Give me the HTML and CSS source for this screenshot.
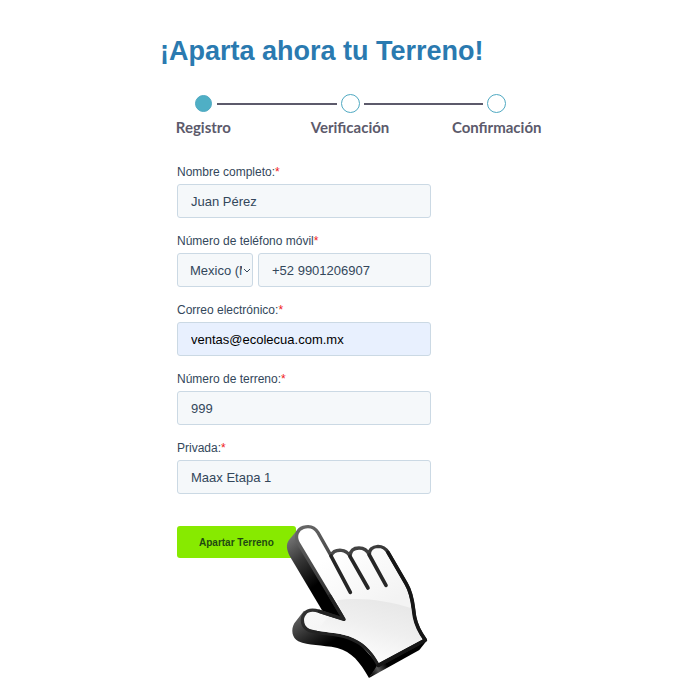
FILE: index.html
```html
<!DOCTYPE html>
<html lang="es">
<head>
    <meta charset="UTF-8">
    <meta name="viewport" content="width=device-width, initial-scale=1.0">
    <title>Aparta ahora tu Terreno</title>
    <link rel="stylesheet" href="styles.css">
</head>
<body>
    <main class="container">
        <h1>¡Aparta ahora tu Terreno!</h1>

        <ol class="steps">
            <li class="step active"><span class="track"><span class="dot"></span></span>Registro</li>
            <li class="step"><span class="track"><span class="dot"></span></span>Verificación</li>
            <li class="step"><span class="track"><span class="dot"></span></span>Confirmación</li>
        </ol>

        <form class="form">
            <div class="field">
                <label for="nombre">Nombre completo:<span class="required">*</span></label>
                <input type="text" id="nombre" value="Juan Pérez">
            </div>
            <div class="field">
                <label for="telefono">Número de teléfono móvil<span class="required">*</span></label>
                <div class="phone">
                    <div class="country">
                        <select id="pais" aria-label="País">
                            <option>Mexico (México)</option>
                        </select>
                        <svg class="chevron" viewBox="0 0 8 5" aria-hidden="true"><path d="M1 1l3 3 3-3"/></svg>
                    </div>
                    <input type="tel" id="telefono" value="+52 9901206907">
                </div>
            </div>
            <div class="field">
                <label for="correo">Correo electrónico:<span class="required">*</span></label>
                <input type="email" id="correo" class="autofilled" value="ventas@ecolecua.com.mx">
            </div>
            <div class="field">
                <label for="terreno">Número de terreno:<span class="required">*</span></label>
                <input type="text" id="terreno" value="999">
            </div>
            <div class="field">
                <label for="privada">Privada:<span class="required">*</span></label>
                <input type="text" id="privada" value="Maax Etapa 1">
            </div>

            <div class="actions">
                <button type="submit" class="submit-btn">Apartar Terreno</button>
                <svg class="hand" viewBox="0 0 480 510" aria-hidden="true">
                    <defs>
                        <linearGradient id="side" gradientUnits="userSpaceOnUse" x1="30" y1="60" x2="130" y2="190">
                            <stop offset="0" stop-color="#777"/>
                            <stop offset="0.45" stop-color="#383838"/>
                            <stop offset="1" stop-color="#000"/>
                        </linearGradient>
                        <linearGradient id="thumb" gradientUnits="userSpaceOnUse" x1="50" y1="290" x2="120" y2="400">
                            <stop offset="0" stop-color="#6a6a6a"/>
                            <stop offset="0.5" stop-color="#333"/>
                            <stop offset="1" stop-color="#000"/>
                        </linearGradient>
                        <linearGradient id="face" gradientUnits="userSpaceOnUse" x1="340" y1="240" x2="280" y2="440">
                            <stop offset="0" stop-color="#e6e6e6"/>
                            <stop offset="0.5" stop-color="#efefef"/>
                            <stop offset="1" stop-color="#fdfdfd"/>
                        </linearGradient>
                        <linearGradient id="fingers" gradientUnits="userSpaceOnUse" x1="180" y1="100" x2="300" y2="280">
                            <stop offset="0" stop-color="#fff"/>
                            <stop offset="1" stop-color="#f3f3f3"/>
                        </linearGradient>
                        <linearGradient id="edge" gradientUnits="userSpaceOnUse" x1="70" y1="30" x2="230" y2="260">
                            <stop offset="0" stop-color="#666"/>
                            <stop offset="1" stop-color="#222"/>
                        </linearGradient>
                        <linearGradient id="wrist" gradientUnits="userSpaceOnUse" x1="268" y1="475" x2="320" y2="445">
                            <stop offset="0" stop-color="#000"/>
                            <stop offset="0.5" stop-color="#555"/>
                            <stop offset="1" stop-color="#000"/>
                        </linearGradient>
                    </defs>
                    <!-- sides -->
                    <path fill="url(#side)" d="M50 44L27 72C17 86 20 102 29 120L127 284L192 312L190 260L70 60Z"/>
                    <path fill="url(#thumb)" d="M72 284L43 322C32 341 36 366 55 376C85 390 125 386 172 396C215 407 240 438 267 486L296 446L200 340Z"/>
                    <path fill="url(#wrist)" d="M267 486L294 444L436 366L440 374L418 402Z"/>
                    <!-- palm and fingers -->
                    <path fill="url(#fingers)" stroke="url(#edge)" stroke-width="10" stroke-linejoin="round" d="M192 310L54 80C44 60 52 40 70 34C90 28 105 35 114 50L153 119C158 107 170 102 184 103C198 104 205 112 210 120C211 104 221 96 237 96C253 96 263 105 268 117C267 101 277 92 294 91C308 91 317 97 324 109L379 204C400 240 398 272 404 304C409 330 421 351 436 372L295 448C272 405 248 381 204 365C162 351 122 355 86 343C67 334 61 309 74 293C84 280 99 280 118 286Z"/>
                    <path fill="url(#face)" d="M170 253C235 243 320 252 395 277C398 310 410 342 427 370L297 440C273 398 246 376 207 361C180 351 140 349 110 344L145 302L199 316Z"/>
                    <path fill="none" stroke="#222" stroke-width="10" stroke-linecap="round" stroke-linejoin="round" d="M150 240L192 310L118 286"/>
                    <path fill="none" stroke="#161616" stroke-width="11" stroke-linecap="round" stroke-linejoin="round" d="M324 109L379 204C400 240 398 272 404 304C409 330 421 351 436 372L295 448"/>
                    <path fill="none" stroke="#262626" stroke-width="11" stroke-linecap="round" d="M153 120L211 229M210 121L264 216M268 117L318 208"/>
                </svg>
            </div>
        </form>
    </main>
</body>
</html>
```
FILE: styles.css
```css
* {
    margin: 0;
    padding: 0;
    box-sizing: border-box;
}

body {
    min-height: 100vh;
    font-family: "Liberation Sans", Arial, sans-serif;
    background: #fff;
    color: #33475b;
}

.container {
    max-width: 440px;
    margin: 0 auto;
    padding: 35px 0 16px;
}

h1 {
    padding-left: 30px;
    font-size: 27px;
    line-height: 32px;
    color: #2a7ab0;
    white-space: nowrap;
}

.steps {
    display: flex;
    margin-top: 27px;
    list-style: none;
}

.step {
    flex: 1;
    font-family: Lato, sans-serif;
    font-size: 15px;
    font-weight: 700;
    line-height: 20px;
    text-align: center;
    color: #5c5a6b;
}

.track {
    display: flex;
    align-items: center;
    gap: 4px;
    margin-bottom: 4px;
}

.track::before,
.track::after {
    content: "";
    flex: 1;
    height: 2px;
    background: #5c5a6b;
}

.step:first-child .track::before,
.step:last-child .track::after {
    visibility: hidden;
}

.dot {
    width: 19px;
    height: 19px;
    border: 1px solid #4fa9c2;
    border-radius: 50%;
}

.active .dot {
    width: 17px;
    height: 17px;
    margin: 1px;
    background: #4fafc5;
}

.form {
    max-width: 301px;
    margin-top: 27px;
    padding-left: 47px;
}

.field {
    margin-bottom: 15px;
}

label {
    display: block;
    margin-bottom: 4px;
    font-size: 12px;
    line-height: 16px;
}

.required {
    color: #f02020;
}

input,
select {
    display: block;
    width: 100%;
    height: 34px;
    padding: 0 13px;
    font-family: inherit;
    font-size: 13px;
    color: #33475b;
    background: #f5f8fa;
    border: 1px solid #cbd9e4;
    border-radius: 3px;
}

.autofilled {
    color: #000;
    background: #e8f0fe;
}

.phone {
    display: flex;
    gap: 5px;
}

.country {
    position: relative;
    flex: 0 0 76px;
}

select {
    padding: 0 10px 0 12px;
    appearance: none;
}

.chevron {
    position: absolute;
    right: 2px;
    top: 15px;
    width: 8px;
    height: 5px;
    fill: none;
    stroke: #33475b;
}

/* bottom padding leaves room for the hand below the button */
.actions {
    position: relative;
    margin-top: 32px;
    padding-bottom: 125px;
}

.submit-btn {
    display: block;
    height: 32px;
    padding: 0 22px;
    font-family: inherit;
    font-size: 10px;
    font-weight: 700;
    color: #1f4a12;
    background: #87ea00;
    border: none;
    border-radius: 3px;
    cursor: pointer;
}

.hand {
    position: absolute;
    left: 103px;
    top: -10px;
    width: 160px;
    height: 170px;
    pointer-events: none;
}
```
